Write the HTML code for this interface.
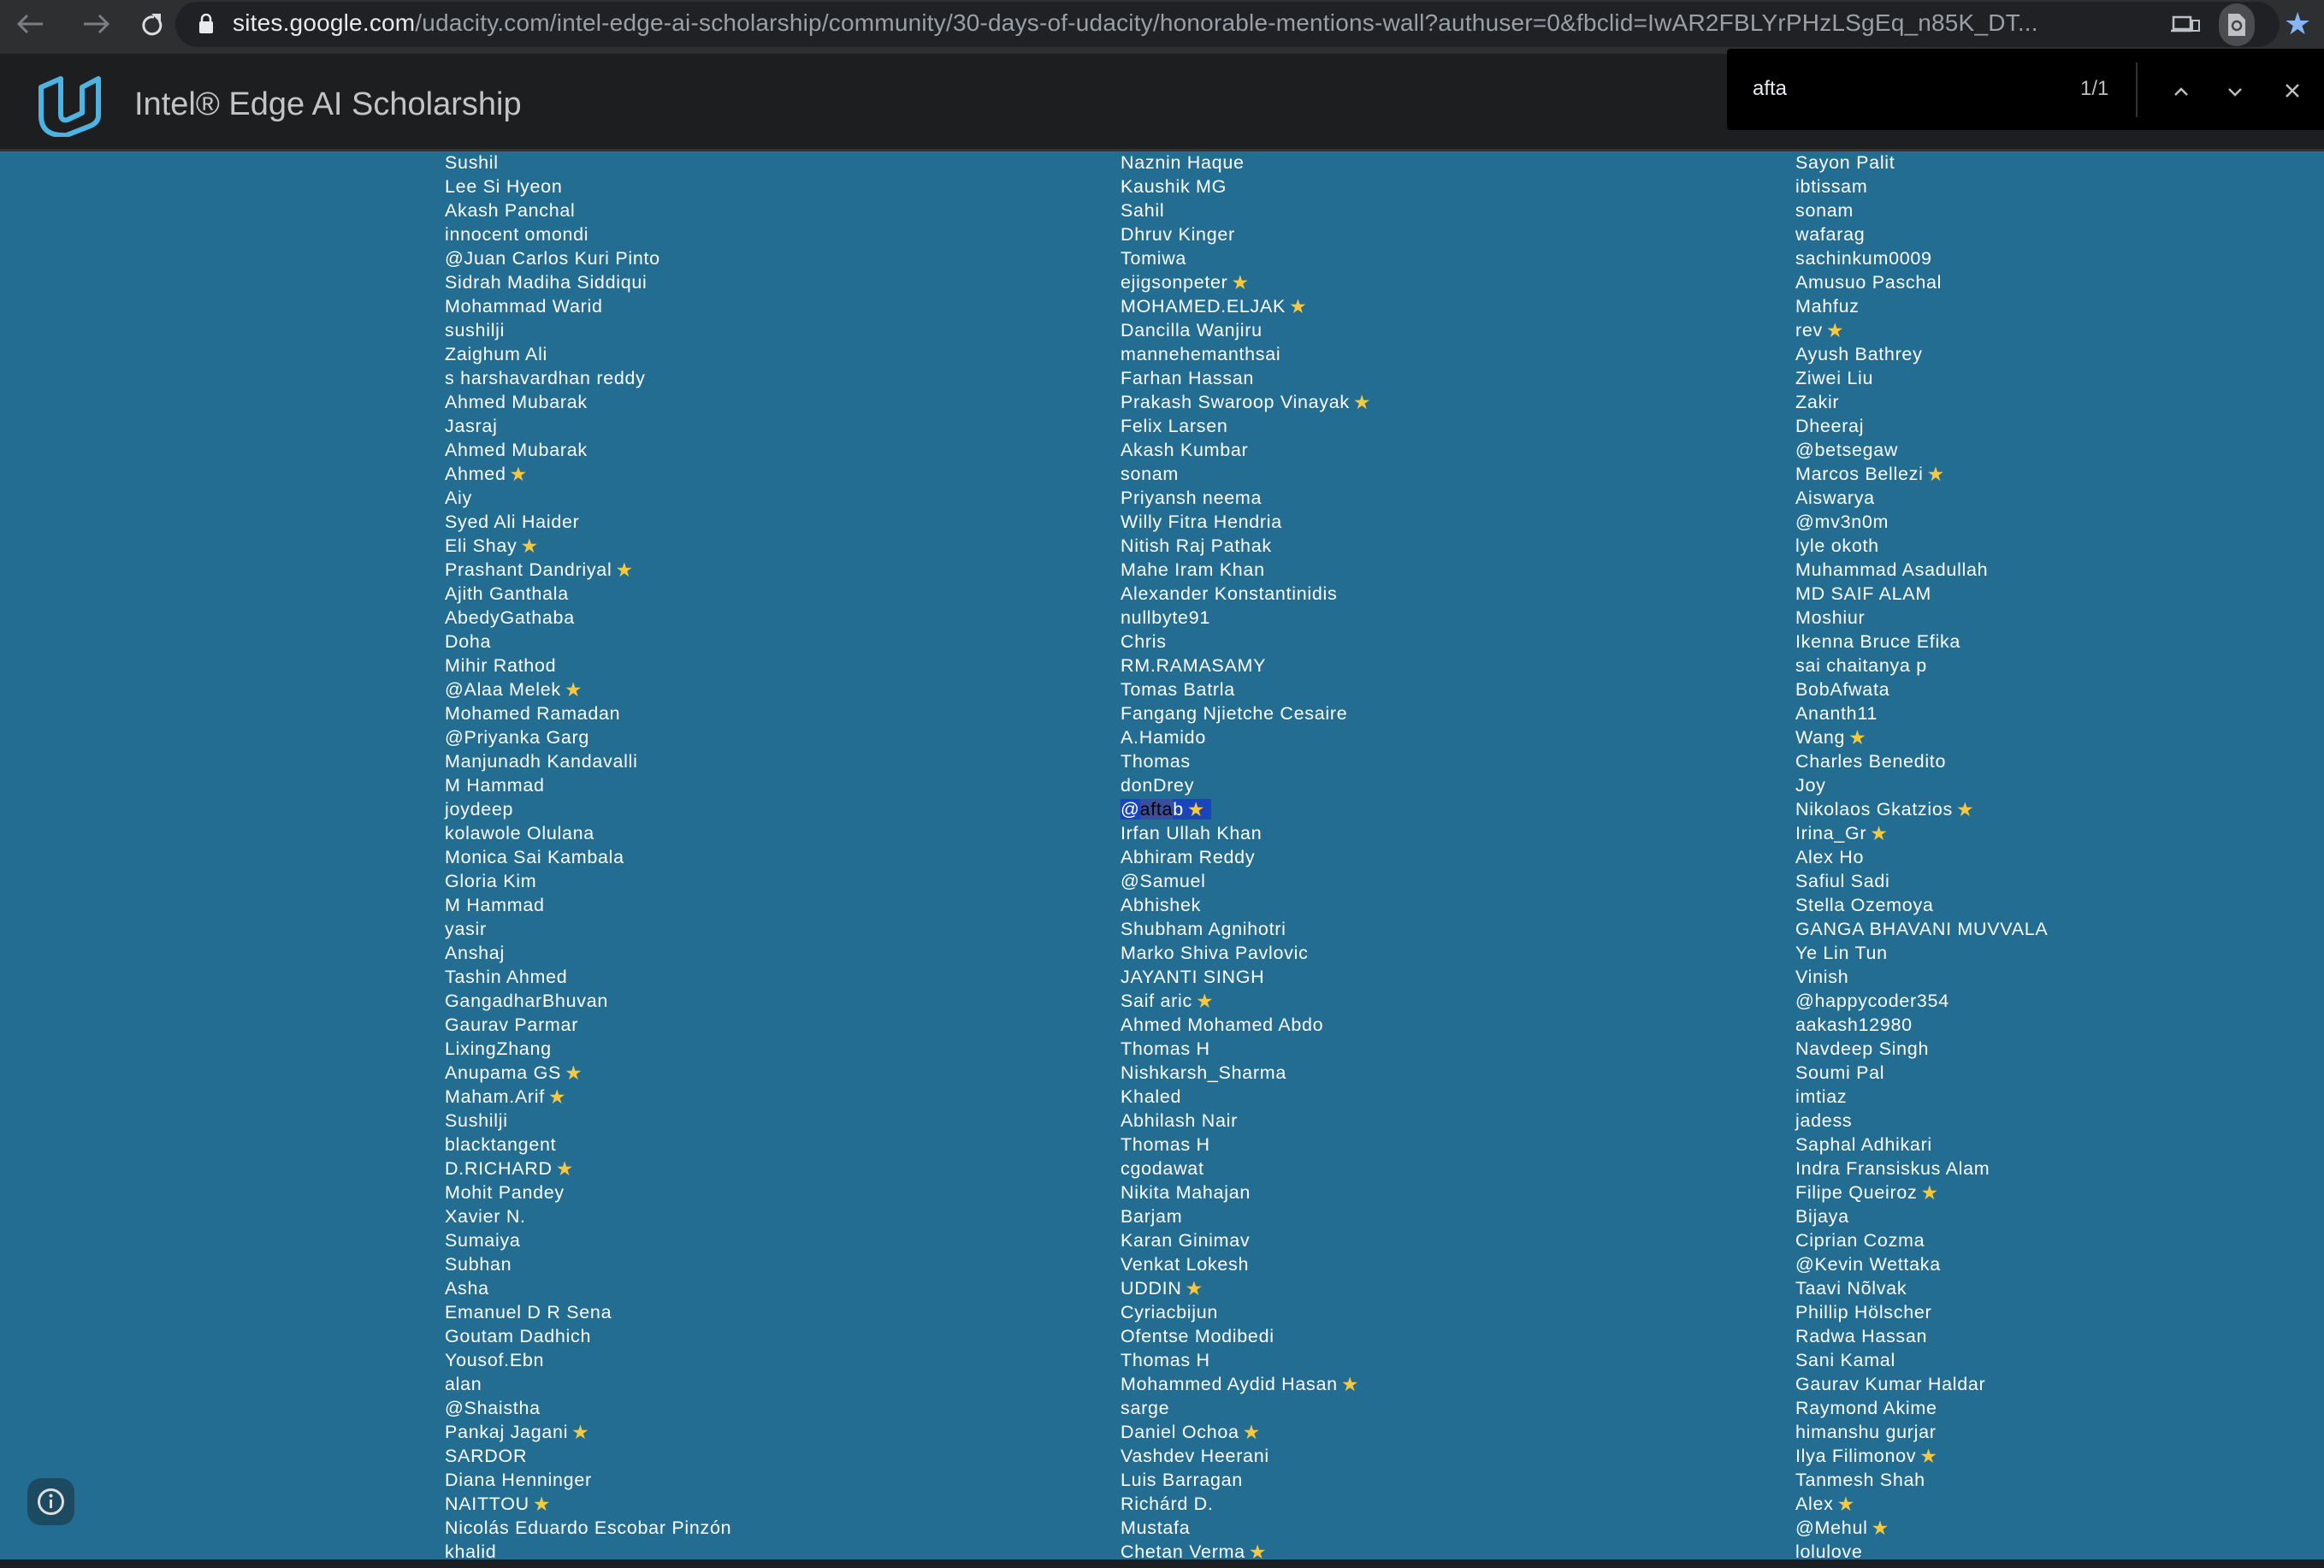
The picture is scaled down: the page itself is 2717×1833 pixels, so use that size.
<!DOCTYPE html>
<html><head><meta charset="utf-8">
<style>
*{margin:0;padding:0;box-sizing:border-box}
html,body{width:2717px;height:1833px;overflow:hidden;background:#236d93;font-family:"Liberation Sans",sans-serif}
#tb{position:absolute;left:0;top:0;width:2717px;height:63px;background:#2e2f31}
#omni{position:absolute;left:205px;top:2px;width:2460px;height:53px;border-radius:27px;background:#202124}
#url{position:absolute;left:272px;top:11px;font-size:28px;color:#9aa0a6;white-space:nowrap;letter-spacing:0.2px}
#url b{color:#e8eaed;font-weight:normal}
#hdr{position:absolute;left:0;top:63px;width:2717px;height:114px;background:#1d1e20;border-bottom:3px solid #333}
#title{position:absolute;left:157px;top:101px;font-size:38px;color:#c4c4c4;letter-spacing:0px}
#find{position:absolute;left:2019px;top:57px;width:698px;height:95px;background:#000;border-radius:4px 0 0 4px}
.col{position:absolute;top:176px;color:#fff;font-size:21.5px;line-height:28px;white-space:nowrap;letter-spacing:0.7px}
.s{color:#f5c842;font-family:"DejaVu Sans",sans-serif;font-size:23px;line-height:0;margin-left:4px;vertical-align:-1px}
#hl{background:#1a45b8;line-height:0}
#hl i{font-style:normal;background:#3a4ea0;color:#000}
#info{position:absolute;left:32px;top:1728px;width:55px;height:55px;border-radius:16px;background:#1c4a61}
#bot{position:absolute;left:0;top:1823px;width:2717px;height:10px;background:#1d1e22}
</style></head><body>
<div id="tb">
<svg style="position:absolute;left:14px;top:12px" width="200" height="40" viewBox="0 0 200 40">
<path d="M36 16H8M18 6L8 16L18 26" stroke="#7b7d80" stroke-width="3" fill="none"/>
<path d="M84 16h28M102 6l10 10-10 10" stroke="#7b7d80" stroke-width="3" fill="none"/>
<path d="M166 8a10 10 0 1 0 6 4" stroke="#dadce0" stroke-width="3" fill="none"/><path d="M163 4h11v11z" fill="#dadce0"/>
</svg>
<div id="omni"></div>
<svg style="position:absolute;left:232px;top:16px" width="18" height="24"><rect x="1" y="9" width="16" height="14" rx="2" fill="#e8eaed"/><path d="M4 10V6a5 5 0 0 1 10 0v4" stroke="#e8eaed" stroke-width="2.5" fill="none"/></svg>
<div id="url"><b>sites.google.com</b>/udacity.com/intel-edge-ai-scholarship/community/30-days-of-udacity/honorable-mentions-wall?authuser=0&amp;fbclid=IwAR2FBLYrPHzLSgEq_n85K_DT...</div>
<svg style="position:absolute;left:2538px;top:14px" width="40" height="30"><rect x="3" y="6" width="20" height="14" fill="none" stroke="#bdc1c6" stroke-width="2.5"/><path d="M0 22h24" stroke="#bdc1c6" stroke-width="2.5"/><rect x="25" y="10" width="8" height="12" fill="none" stroke="#bdc1c6" stroke-width="2"/></svg>
<div style="position:absolute;left:2594px;top:4px;width:42px;height:50px;border-radius:24px;background:#4a4c50"></div>
<svg style="position:absolute;left:2603px;top:14px" width="24" height="30"><path d="M2 2h13l7 7v19H2z" fill="#bdc1c6"/><circle cx="12" cy="16" r="5" fill="none" stroke="#444" stroke-width="2.5"/></svg>
<div style="position:absolute;left:2670px;top:8px;font-size:36px;color:#8ab4f8;font-family:'DejaVu Sans'">★</div>
</div>
<div id="hdr">
<svg style="position:absolute;left:44px;top:25px" width="78" height="72" viewBox="0 0 78 72">
<path d="M4 14L27 4V45Q27 54 35 52L52 44V14L71 4V47Q71 55 62 59L34 70Q4 72 4 47Z" fill="none" stroke="#4db3e2" stroke-width="6" stroke-linejoin="round"/>
</svg>
</div>
<div id="title">Intel® Edge AI Scholarship</div>
<div id="find">
<div style="position:absolute;left:30px;top:33px;color:#e8eaed;font-size:24px">afta</div>
<div style="position:absolute;left:413px;top:33px;color:#bdbdbd;font-size:24px">1/1</div>
<div style="position:absolute;left:478px;top:16px;width:2px;height:64px;background:#333"></div>
<svg style="position:absolute;left:520px;top:38px" width="170" height="24"><path d="M4 16l7-7 7 7M67 9l7 7 7-7" stroke="#bdbdbd" stroke-width="2.5" fill="none"/><path d="M134 4l14 14M148 4l-14 14" stroke="#bdbdbd" stroke-width="2.5"/></svg>
</div>

<div class="col" style="left:520px">Sushil<br>Lee Si Hyeon<br>Akash Panchal<br>innocent omondi<br>@Juan Carlos Kuri Pinto<br>Sidrah Madiha Siddiqui<br>Mohammad Warid<br>sushilji<br>Zaighum Ali<br>s harshavardhan reddy<br>Ahmed Mubarak<br>Jasraj<br>Ahmed Mubarak<br>Ahmed<span class="s">★</span><br>Aiy<br>Syed Ali Haider<br>Eli Shay<span class="s">★</span><br>Prashant Dandriyal<span class="s">★</span><br>Ajith Ganthala<br>AbedyGathaba<br>Doha<br>Mihir Rathod<br>@Alaa Melek<span class="s">★</span><br>Mohamed Ramadan<br>@Priyanka Garg<br>Manjunadh Kandavalli<br>M Hammad<br>joydeep<br>kolawole Olulana<br>Monica Sai Kambala<br>Gloria Kim<br>M Hammad<br>yasir<br>Anshaj<br>Tashin Ahmed<br>GangadharBhuvan<br>Gaurav Parmar<br>LixingZhang<br>Anupama GS<span class="s">★</span><br>Maham.Arif<span class="s">★</span><br>Sushilji<br>blacktangent<br>D.RICHARD<span class="s">★</span><br>Mohit Pandey<br>Xavier N.<br>Sumaiya<br>Subhan<br>Asha<br>Emanuel D R Sena<br>Goutam Dadhich<br>Yousof.Ebn<br>alan<br>@Shaistha<br>Pankaj Jagani<span class="s">★</span><br>SARDOR<br>Diana Henninger<br>NAITTOU<span class="s">★</span><br>Nicolás Eduardo Escobar Pinzón<br>khalid</div>

<div class="col" style="left:1310px">Naznin Haque<br>Kaushik MG<br>Sahil<br>Dhruv Kinger<br>Tomiwa<br>ejigsonpeter<span class="s">★</span><br>MOHAMED.ELJAK<span class="s">★</span><br>Dancilla Wanjiru<br>mannehemanthsai<br>Farhan Hassan<br>Prakash Swaroop Vinayak<span class="s">★</span><br>Felix Larsen<br>Akash Kumbar<br>sonam<br>Priyansh neema<br>Willy Fitra Hendria<br>Nitish Raj Pathak<br>Mahe Iram Khan<br>Alexander Konstantinidis<br>nullbyte91<br>Chris<br>RM.RAMASAMY<br>Tomas Batrla<br>Fangang Njietche Cesaire<br>A.Hamido<br>Thomas<br>donDrey<br><span id="hl">@<i>afta</i>b<span class="s">★</span>&nbsp;</span><br>Irfan Ullah Khan<br>Abhiram Reddy<br>@Samuel<br>Abhishek<br>Shubham Agnihotri<br>Marko Shiva Pavlovic<br>JAYANTI SINGH<br>Saif aric<span class="s">★</span><br>Ahmed Mohamed Abdo<br>Thomas H<br>Nishkarsh_Sharma<br>Khaled<br>Abhilash Nair<br>Thomas H<br>cgodawat<br>Nikita Mahajan<br>Barjam<br>Karan Ginimav<br>Venkat Lokesh<br>UDDIN<span class="s">★</span><br>Cyriacbijun<br>Ofentse Modibedi<br>Thomas H<br>Mohammed Aydid Hasan<span class="s">★</span><br>sarge<br>Daniel Ochoa<span class="s">★</span><br>Vashdev Heerani<br>Luis Barragan<br>Richárd D.<br>Mustafa<br>Chetan Verma<span class="s">★</span></div>

<div class="col" style="left:2099px">Sayon Palit<br>ibtissam<br>sonam<br>wafarag<br>sachinkum0009<br>Amusuo Paschal<br>Mahfuz<br>rev<span class="s">★</span><br>Ayush Bathrey<br>Ziwei Liu<br>Zakir<br>Dheeraj<br>@betsegaw<br>Marcos Bellezi<span class="s">★</span><br>Aiswarya<br>@mv3n0m<br>lyle okoth<br>Muhammad Asadullah<br>MD SAIF ALAM<br>Moshiur<br>Ikenna Bruce Efika<br>sai chaitanya p<br>BobAfwata<br>Ananth11<br>Wang<span class="s">★</span><br>Charles Benedito<br>Joy<br>Nikolaos Gkatzios<span class="s">★</span><br>Irina_Gr<span class="s">★</span><br>Alex Ho<br>Safiul Sadi<br>Stella Ozemoya<br>GANGA BHAVANI MUVVALA<br>Ye Lin Tun<br>Vinish<br>@happycoder354<br>aakash12980<br>Navdeep Singh<br>Soumi Pal<br>imtiaz<br>jadess<br>Saphal Adhikari<br>Indra Fransiskus Alam<br>Filipe Queiroz<span class="s">★</span><br>Bijaya<br>Ciprian Cozma<br>@Kevin Wettaka<br>Taavi Nõlvak<br>Phillip Hölscher<br>Radwa Hassan<br>Sani Kamal<br>Gaurav Kumar Haldar<br>Raymond Akime<br>himanshu gurjar<br>Ilya Filimonov<span class="s">★</span><br>Tanmesh Shah<br>Alex<span class="s">★</span><br>@Mehul<span class="s">★</span><br>lolulove</div>

<div id="info"><svg width="55" height="55"><circle cx="27.5" cy="27.5" r="14" fill="none" stroke="#ddd" stroke-width="3"/><path d="M27.5 25v10" stroke="#ddd" stroke-width="3"/><circle cx="27.5" cy="20.5" r="2" fill="#ddd"/></svg></div>
<div id="bot"></div>
</body></html>
